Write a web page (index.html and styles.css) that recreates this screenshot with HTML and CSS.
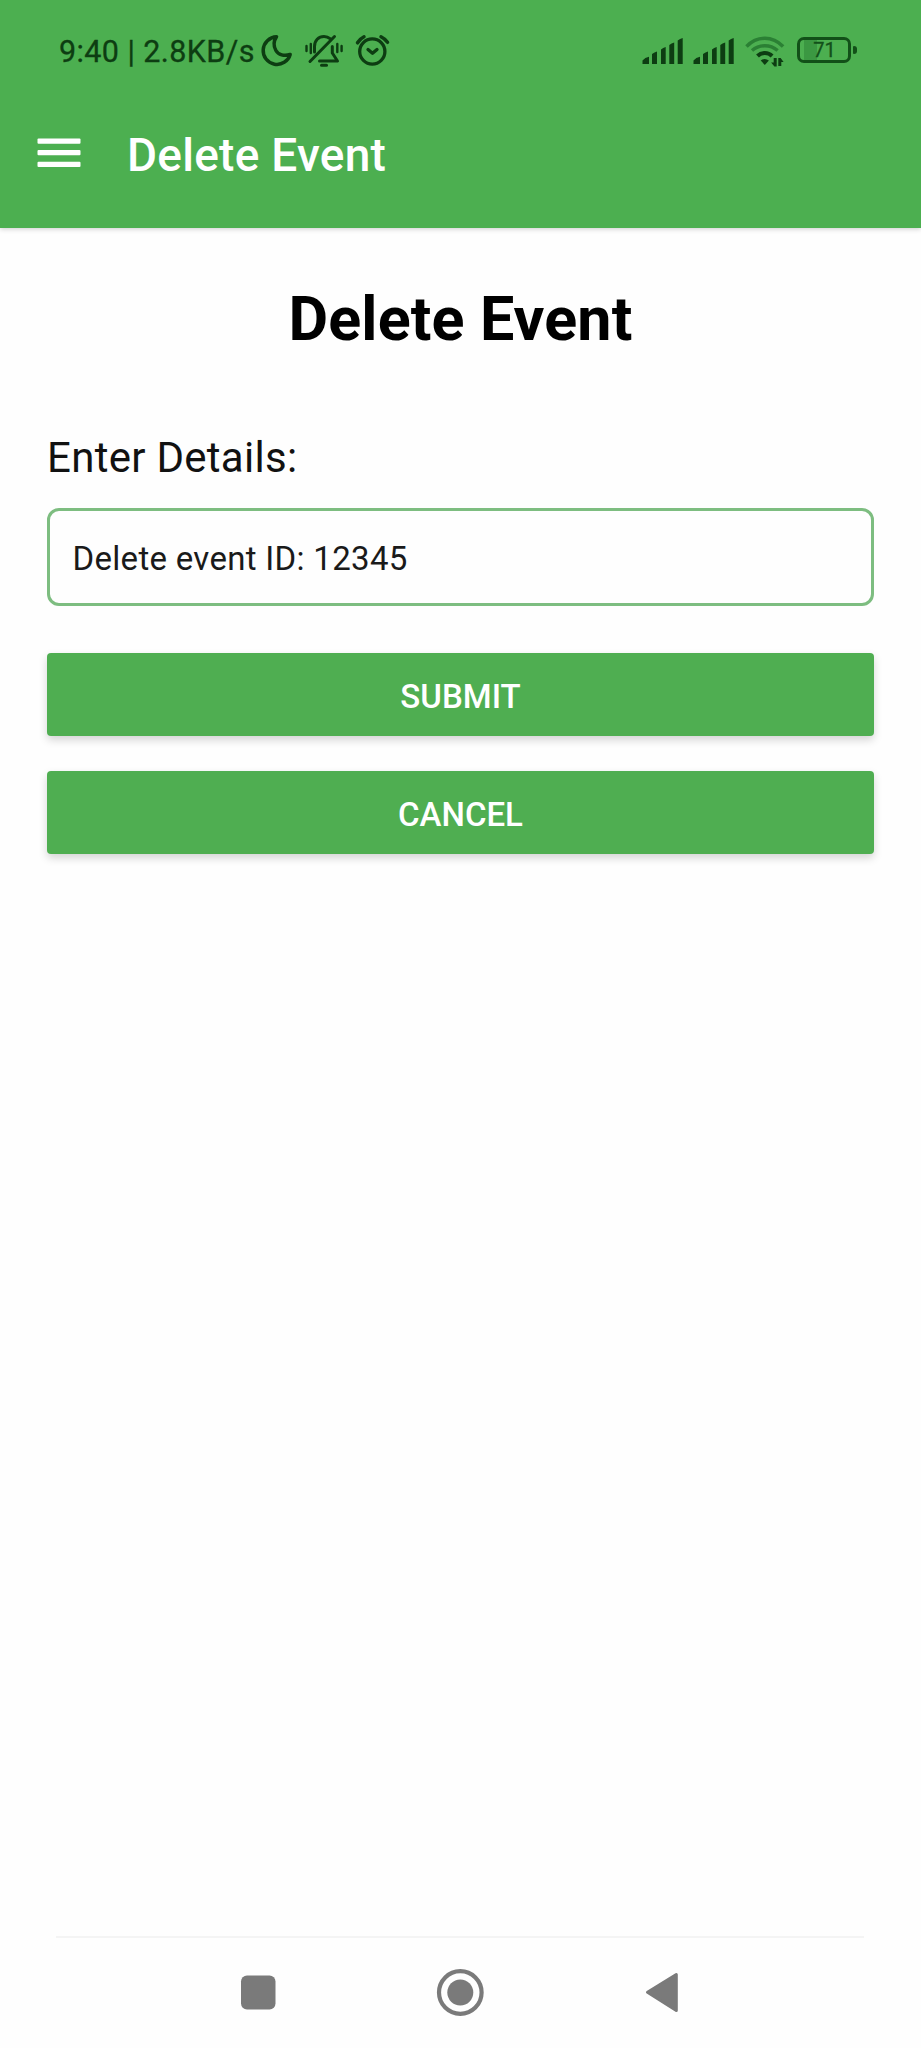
FILE: index.html
```html
<!DOCTYPE html>
<html lang="en">
<head>
<meta charset="utf-8">
<title>Delete Event</title>
<link rel="stylesheet" href="styles.css">
</head>
<body>
<div class="screen">
  <header class="header">
    <div class="status">
      <span class="status-text">9:40 | 2.8KB/s</span>
      <svg class="moon" width="36" height="40" viewBox="260 30 36 40" fill="none" stroke="#0d3d12" stroke-width="3.500" stroke-linejoin="round"><path d="M276.500 36.800a13.800 13.800 0 1 0 13.700 17.700c-6 2-11.900.4-14.300-4-2.600-4.600-2.200-9.500.6-13.700z"/></svg>
      <svg class="bell" width="44" height="40" viewBox="302 30 44 40" fill="none" stroke="#0d3d12" stroke-width="3" stroke-linecap="round" stroke-linejoin="round"><path d="M310 61.500L334.500 36.500M314.500 52v-5.500c0-6 4-10 9.500-10 2.500 0 4.500.8 6 2.200M332.300 46.500v6.500l5.200 8H319.500"/><path d="M321.500 65.300h5" stroke-width="3"/><path d="M306.500 46v5M310.800 44v9M337.300 44v8M341.600 46v5" stroke-width="2.400"/></svg>
      <svg class="alarm" width="42" height="40" viewBox="352 30 42 40" fill="none" stroke="#0d3d12" stroke-width="3.300" stroke-linecap="round" stroke-linejoin="round"><circle cx="372.300" cy="51.500" r="12.600"/><path d="M368 49.500l4.500 3.800 4.500-3.800"/><path d="M357.500 42.800q2.500-4 6.500-6M381 36.800q4 2 6.500 5.500" stroke-width="3.500"/></svg>
      <svg class="signal" width="44" height="40" viewBox="641 30 44 40" fill="#0d3d12"><path d="M642.500 64v-3.500q2.500-3.200 6.500-3.800V64z"/><path d="M652 54q2.500-2 5-2.500V64h-5zM661 49.500q2-2 4.700-2.500V64H661zM669.300 45q2.200-2 4.900-2.500V64h-4.900zM677.700 40.500q2.200-2 5-2.500v26h-5z"/></svg>
      <svg class="signal second" width="44" height="40" viewBox="641 30 44 40" fill="#0d3d12"><path d="M642.500 64v-3.500q2.500-3.200 6.500-3.800V64z"/><path d="M652 54q2.500-2 5-2.500V64h-5zM661 49.500q2-2 4.700-2.500V64H661zM669.300 45q2.200-2 4.900-2.500V64h-4.900zM677.700 40.500q2.200-2 5-2.500v26h-5z"/></svg>
      <svg class="wifi" width="44" height="40" viewBox="743 30 44 40" fill="none" stroke="#0d3d12"><path d="M746.500 46.500q8-8.200 18.300-8.200t18.300 8.200M752 50.500q5.500-4.700 12.800-4.700t12.800 4.700" stroke="#2b8034" stroke-width="3.500"/><path d="M757.500 56q3-3 7.300-3t7.300 3" stroke-width="4"/><path d="M760.700 60.500q4-3 8.200 0l-4.100 4.500z" fill="#0d3d12" stroke="none"/><path d="M776.700 58v8.500h-2.300l-3.300-4h2.600V58zM778.300 66v-8h2.300l3 4h-2.300v4z" fill="#0d3d12" stroke="none"/></svg>
      <div class="battery"><span class="charge">71</span></div>
      <span class="nub"></span>
    </div>
    <div class="appbar">
      <svg class="menu" width="44" height="30" viewBox="0 0 44 30" fill="#fff"><rect x=".5" y=".6" width="43" height="5.200" rx="1"/><rect x=".5" y="12" width="43" height="5.200" rx="1"/><rect x=".5" y="23.800" width="43" height="5.200" rx="1"/></svg>
      <span class="appbar-title">Delete Event</span>
    </div>
  </header>
  <main class="content">
    <h1 class="heading">Delete Event</h1>
    <label class="label" for="details">Enter Details:</label>
    <input class="input" id="details" type="text" value="Delete event ID: 12345">
    <button class="button">SUBMIT</button>
    <button class="button">CANCEL</button>
  </main>
  <nav class="navbar">
    <svg width="36" height="40" viewBox="240 1972 36 40"><rect x="241" y="1975.500" width="34.500" height="34" rx="6" fill="#7a7a7a"/></svg>
    <svg width="50" height="50" viewBox="435 1967 50 50"><circle cx="460.300" cy="1992.500" r="21.300" fill="none" stroke="#7a7a7a" stroke-width="4.200"/><circle cx="460.300" cy="1992.500" r="13" fill="#7a7a7a"/></svg>
    <svg width="36" height="42" viewBox="644 1971 36 42"><path d="M647.500 1992.200L676.300 1974.500V2010.500z" fill="#7a7a7a" stroke="#7a7a7a" stroke-width="3" stroke-linejoin="round"/></svg>
  </nav>
</div>
</body>
</html>
```
FILE: styles.css
```css
* { box-sizing: border-box; }
body { margin: 0; font-family: Roboto, sans-serif; background: #fefefe; }
.screen { width: 921px; height: 2048px; display: flex; flex-direction: column; }

.header { height: 228px; background: #4caf50; box-shadow: 0 1px 5px rgba(0, 0, 0, .2); flex: none; }
.status { height: 100px; padding: 30px 0 0 59px; display: flex; align-items: flex-start; }
.status svg { flex: none; }
.status-text { width: 201px; flex: none; font-size: 30.5px; line-height: 43px; letter-spacing: .4px; color: #0d3d12; -webkit-text-stroke: .3px #0d3d12; white-space: nowrap; }
.bell { margin-left: 6px; }
.alarm { margin-left: 6px; }
.signal { margin-left: 247px; }
.second { margin-left: 7px; }
.wifi { margin-left: 7px; }
.battery { width: 54px; height: 26px; margin: 7px 0 0 10px; border: 3px solid #125018; border-radius: 7px; background: linear-gradient(90deg, transparent 4px, #3b9842 4px, #3b9842 17px, transparent 17px); text-align: center; }
.charge { display: block; font-size: 20px; line-height: 21px; color: #12501a; -webkit-text-stroke: .3px #12501a; padding-left: 1px; }
.nub { width: 4px; height: 8px; margin: 16px 0 0 2px; border-radius: 1px 3px 3px 1px; background: #125018; }

.appbar { display: flex; align-items: flex-start; padding-left: 37px; }
.menu { margin-top: 38px; }
.appbar-title { margin: 25px 0 0 46px; font-size: 46px; line-height: 60px; font-weight: 500; letter-spacing: .27px; color: #fff; }

.content { flex: 1; padding: 0 47px; display: flex; flex-direction: column; }
.heading { margin: 51px 0 0; font-size: 61px; line-height: 80px; font-weight: 700; letter-spacing: .15px; color: #000; text-align: center; }
.label { margin-top: 69px; font-size: 42px; line-height: 60px; letter-spacing: .28px; color: #111; }
.input { height: 98px; margin: 20px 0 0; padding: 2px 22.5px 0; border: 3px solid #7dbd80; border-radius: 12px; outline: 0; background: #fefefe; font: 400 33px Roboto, sans-serif; letter-spacing: .3px; color: #1a1a1a; }
.button { height: 83px; margin: 47px 0 0; padding: 3px 0 0; border: 0; border-radius: 4px; background: #4fae51; box-shadow: 0 4px 9px rgba(0, 0, 0, .17); font: 500 33px Roboto, sans-serif; color: #fff; }
.button + .button { margin-top: 35px; }

.navbar { height: 112px; margin: 0 57px 0 56px; padding: 0 0 2px 184px; border-top: 2px solid #f4f4f4; display: flex; align-items: center; }
.navbar svg + svg { margin-left: 159px; }
```
